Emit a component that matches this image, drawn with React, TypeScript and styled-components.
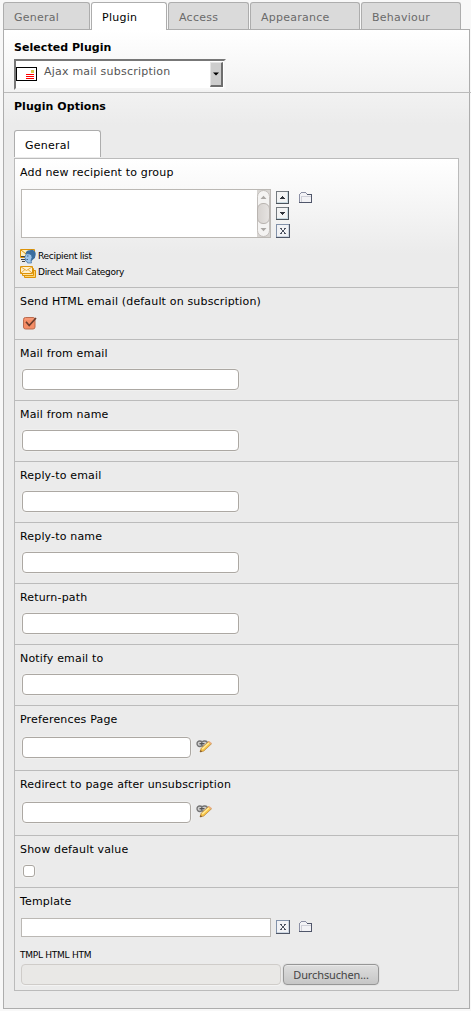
import React from 'react';
import styled, { createGlobalStyle, css } from 'styled-components';

const GlobalStyle = createGlobalStyle`
  *, *::before, *::after { box-sizing: border-box; }
  body { margin: 0; background: #f8f8f8; font-family: "DejaVu Sans", Verdana, sans-serif; font-size: 11px; letter-spacing: .165px; color: #000; }
  input, button { font: inherit; letter-spacing: inherit; margin: 0; padding: 0; outline: none; }
  svg { display: block; flex: none; }
`;

const Page = styled.main`
  width: 471px;
  height: 1011px;
  padding: 2px 0 0 3px;
  overflow: hidden;
`;

const TabBar = styled.nav`
  display: flex;
  gap: 1px;
  height: 28px;
  position: relative;
`;

const Tab = styled.button<{ $width: number; $active?: boolean }>`
  width: ${p => p.$width}px;
  height: ${p => (p.$active ? 28 : 27)}px;
  padding: 2px 0 0 10px;
  text-align: left;
  line-height: 25px;
  letter-spacing: .25px;
  border: 1px solid #adadad;
  border-bottom: 0;
  border-radius: 3px 3px 0 0;
  background: ${p => (p.$active ? '#fff' : '#dadada')};
  color: ${p => (p.$active ? '#000' : '#6a6a6a')};
`;

const Panel = styled.section`
  width: 467px;
  height: 980px;
  margin-top: -1px;
  border: 1px solid #adadad;
  background: linear-gradient(#fff, #ebebeb 95px) #ebebeb;
`;

const SelectedPlugin = styled.div`
  width: 467px;
  height: 63px;
  padding: 11px 0 0 10px;
  border-bottom: 1px solid #bbb;
`;

const Heading = styled.h2`
  margin: 0;
  font-size: 11px;
  line-height: 14px;
  font-weight: bold;
  letter-spacing: .05px;
`;

const SelectBox = styled.div`
  display: flex;
  width: 212px;
  height: 31px;
  margin-top: 4px;
  padding: 1px 1px 2px 0;
  border: 2px solid;
  border-color: #777 #f6f6f6 #f6f6f6 #777;
  background: #fff;
  color: #555;
`;

const SelectText = styled.span`
  flex: 1;
  padding: 3px 0 0 7px;
  line-height: 13px;
  letter-spacing: .22px;
`;

const EnvelopeSlot = styled.span`
  padding-top: 5px;
`;

const SelectArrow = styled.span`
  display: flex;
  align-items: center;
  justify-content: center;
  width: 13px;
  height: 25px;
  border: 1px solid;
  border-width: 1px 2px 2px 1px;
  border-color: #e4e4e4 #6e6e6e #6e6e6e #e4e4e4;
  background: #cdcdcd;
`;

const Options = styled.div`
  padding: 7px 10px 0;
`;

const InnerTab = styled.div`
  width: 87px;
  height: 27px;
  margin-top: 16px;
  padding: 2px 0 0 10px;
  line-height: 25px;
  letter-spacing: .25px;
  border: 1px solid #adadad;
  border-bottom: 0;
  border-radius: 3px 3px 0 0;
  background: #fff;
`;

const Form = styled.form`
  width: 445px;
  margin-top: 1px;
  border: 1px solid #bbb;
  border-bottom: 0;
  background: linear-gradient(#fff, #ebebeb 95px) #ebebeb;
`;

const Row = styled.div<{ $height: number }>`
  height: ${p => p.$height}px;
  padding: 6px 0 0 5px;
  border-bottom: 1px solid #bbb;
`;

const Label = styled.label`
  display: block;
  height: 15px;
  line-height: 15px;
`;

const Line = styled.div<{ $top: number; $left?: number }>`
  display: flex;
  align-items: flex-start;
  padding: ${p => p.$top}px 0 0 ${p => p.$left ?? 2}px;
`;

const TextInput = styled.input<{ $width: number }>`
  display: block;
  width: ${p => p.$width}px;
  height: 21px;
  border: 1px solid #aca8a3;
  border-radius: 4px;
  background: #fff;
  box-shadow: 0 0 0 1px #f0f0ef;
`;

const LinkSlot = styled.span`
  margin: 3px 0 0 5px;
`;

const CheckBox = styled.input.attrs({ type: 'checkbox' })`
  appearance: none;
  display: block;
  width: 12px;
  height: 12px;
  border: 1px solid #aaa6a1;
  border-radius: 3px;
  background: #fff;
  box-shadow: 0 0 0 1px #f1f1f0;
`;

const ListBox = styled.div`
  display: flex;
  justify-content: flex-end;
  width: 250px;
  height: 49px;
  border: 1px solid #bbb8b4;
  background: #fff;
`;

const Stack = styled.div`
  display: flex;
  flex-direction: column;
  gap: 3px;
  margin: 2px 0 0 5px;

  > :last-child { margin-top: 1px; }
`;

const IconSlot = styled.span<{ $top: number; $left: number }>`
  margin: ${p => p.$top}px 0 0 ${p => p.$left}px;
`;

const TypeList = styled.ul`
  list-style: none;
  margin: 10px 0 0;
  padding: 0;
`;

const TypeItem = styled.li`
  display: flex;
  gap: 2px;
  height: 16px;
  line-height: 16px;
  font-size: 9px;
  letter-spacing: -.3px;
`;

const PlainInput = styled.input`
  display: block;
  width: 250px;
  height: 19px;
  border: 1px solid #bbb8b4;
  background: #fff;
`;

const Extensions = styled.div`
  margin-top: 12px;
  height: 13px;
  line-height: 13px;
  font-size: 9px;
  letter-spacing: -.25px;
`;

const fileControl = css`
  height: 21px;
  border-radius: 4px;
`;

const FileField = styled.div`
  ${fileControl}
  width: 260px;
  border: 1px solid #cfccc9;
  background: #e9e8e6;
  box-shadow: 0 1px 0 #f3f3f3;
`;

const BrowseButton = styled.button`
  ${fileControl}
  width: 96px;
  margin-left: 2px;
  border: 1px solid #969696;
  background: linear-gradient(#dedede, #c6c6c6);
  box-shadow: 0 0 0 1px #e3e3e3, inset 0 1px 0 #e9e9e9;
  color: #454545;
  font-family: "Noto Sans", "Open Sans", sans-serif;
  font-size: 11px;
  letter-spacing: -.13px;
  line-height: 17px;
`;

const Envelope = () => (
  <svg width="21" height="14" viewBox="0 0 21 14" shapeRendering="crispEdges">
    <path d="M0 0h21v14H0z" fill="#000" />
    <path d="M1 1h19v12H1z" fill="#fff" />
    <path d="M15 3h3v3h-3z" fill="#d8c84c" />
    <path d="M10 7h8v1h-8zM10 9h8v1h-8zM10 11h8v1h-8z" fill="#f00" />
  </svg>
);

const ScrollBar = () => (
  <svg width="13" height="47" viewBox="0 0 13 47">
    <defs>
      <linearGradient id="thumb">
        <stop offset="0" stopColor="#d6d2cf" />
        <stop offset="1" stopColor="#e6e3e1" />
      </linearGradient>
    </defs>
    <path d="M0 0h13v47H0z" fill="#d8d5d2" />
    <rect x=".5" y=".5" width="12" height="46" rx="6" fill="#f4f3f2" stroke="#c2bebb" />
    <rect x=".5" y="13.5" width="12" height="20" rx="5.5" fill="url(#thumb)" stroke="#b9b4b0" />
    <path d="M3.5 9l3-3.2 3 3.2zM3.5 38h6l-3 3.2z" fill="#aaa7a4" />
  </svg>
);

const ArrowButton = ({ down }: { down?: boolean }) => (
  <svg width="13" height="13" viewBox="0 0 13 13" shapeRendering="crispEdges">
    <path d="M0 0h13v13H0z" fill="#4b535b" />
    <path d="M0 0h12v1H1v11H0z" fill="#747b80" />
    <path d="M1 1h11v11H1z" fill="#c9dbe2" />
    <path d="M1 1h10v10H1z" fill="#f3f4f4" />
    <path
      d={down ? 'M4 5h5v1H4zM5 6h3v1H5zM6 7h1v1H6z' : 'M6 5h1v1H6zM5 6h3v1H5zM4 7h5v1H4z'}
      fill="#30353b"
    />
  </svg>
);

const ClearButton = () => (
  <svg width="14" height="14" viewBox="0 0 14 14" shapeRendering="crispEdges">
    <path d="M0 0h14v14H0z" fill="#4e5565" />
    <path d="M0 0h13v1H1v12H0z" fill="#8292aa" />
    <path d="M1 1h12v12H1z" fill="#cbd5e1" />
    <path d="M1 1h11v11H1z" fill="#f1f2f5" />
    <path
      d="M4 4h2v1H4zM8 4h2v1H8zM5 5h1v1H5zM8 5h1v1H8zM6 6h2v2H6zM5 8h1v1H5zM8 8h1v1H8zM4 9h2v1H4zM8 9h2v1H8z"
      fill="#4c5260"
    />
  </svg>
);

const Folder = () => (
  <svg width="13" height="11" viewBox="0 0 13 11" shapeRendering="crispEdges">
    <path d="M1 2h1V1h5v1h1v1h4v7H1z" fill="#f2f2f5" />
    <path d="M2 4h10v1H3v5H2z" fill="#cfd0d8" />
    <path d="M0 2h1v8H0zM1 1h1v1H1zM2 0h5v1H2zM7 1h1v1H7z" fill="#8c90a5" />
    <path d="M8 2h5v1H8zM12 2h1v9h-1zM0 10h13v1H0z" fill="#50566a" />
  </svg>
);

const CheckedBox = () => (
  <svg width="15" height="14" viewBox="0 0 15 14">
    <rect x=".5" y="1.5" width="11.5" height="11.5" rx="2" fill="#f58d66" stroke="#bb6b4e" />
    <path d="M2 3h9" stroke="#f8a384" />
    <path d="M3 5.800l3.200 3.700L13 2" fill="none" stroke="#6b3c2c" strokeWidth="1.700" />
  </svg>
);

const RecipientIcon = () => (
  <svg width="16" height="16" viewBox="0 0 16 16">
    <path d="M.5 1.5h14v8H.5z" fill="#fff0c2" stroke="#dd9308" />
    <path d="M1 2l5 4 7-4" fill="none" stroke="#dd9308" />
    <path d="M1 8.5h4M1 11.5h4M2 13.5h3" stroke="#444" />
    <path d="M5.500 6Q6 2 10 2.300 12 1 14 2.500 16.200 4 15.600 7q0 3-2.600 4.500L11 13.500 9 8z" fill="#3b6d9f" />
    <path d="M6.500 5.500l3 .5 2 1 .5 2.500-1 3 .5 2.500H7.500L7 13.500 5.500 13V10.500L4.500 9.800z" fill="#9cc3ea" stroke="#3b6d9f" strokeWidth=".7" />
    <path d="M7 8h1.500M6.500 11.500h1.500" stroke="#3b6d9f" />
  </svg>
);

const CategoryIcon = () => (
  <svg width="16" height="16" viewBox="0 0 16 16">
    <path d="M4.500 6.500h11v7h-11z" fill="#ffd36b" stroke="#dd9308" />
    <path d="M2.500 4.500h11v7h-11z" fill="#ffe3a0" stroke="#dd9308" />
    <path d="M.5 2.500h12v7H.5z" fill="#fff0cc" stroke="#dd9308" />
    <path d="M1 3l5.500 3.500L12 3M1 9l4-3.500M12 9L8 5.500" fill="none" stroke="#e0a030" strokeWidth=".9" />
  </svg>
);

const LinkPencil = () => (
  <svg width="16" height="13" viewBox="0 0 16 13">
    <g fill="#cfcfcf" stroke="#747474" strokeWidth="1.300">
      <rect x="1" y="1" width="5.500" height="5.500" rx="2.700" />
      <rect x="5.500" y="1" width="6" height="5.500" rx="2.700" />
      <path d="M3.500 3.700h5" stroke="#4e4e4e" />
    </g>
    <path d="M4 12l1.200-3.800 7.300-6.700 3 2.300-7.700 7.200z" fill="#f8c548" stroke="#b5803a" strokeWidth=".7" />
    <path d="M6.200 9l6.600-6" stroke="#ffec9c" strokeWidth="1.500" />
    <path d="M12.200 1.900l1-.9 2.500 2.100-1 1z" fill="#eeb08a" />
    <path d="M4 12.100l.7-2 1.500 1.300z" fill="#714a25" />
  </svg>
);

const tabs = [
  { name: 'General', width: 87 },
  { name: 'Plugin', width: 76, active: true },
  { name: 'Access', width: 81 },
  { name: 'Appearance', width: 110 },
  { name: 'Behaviour', width: 100 },
];

const mailFields = [
  'Mail from email',
  'Mail from name',
  'Reply-to email',
  'Reply-to name',
  'Return-path',
  'Notify email to',
];

const pageFields = ['Preferences Page', 'Redirect to page after unsubscription'];

export default function App() {
  return (
    <>
      <GlobalStyle />
      <Page>
        <TabBar>
          {tabs.map(t => (
            <Tab key={t.name} $width={t.width} $active={t.active}>{t.name}</Tab>
          ))}
        </TabBar>
        <Panel>
          <SelectedPlugin>
            <Heading>Selected Plugin</Heading>
            <SelectBox>
              <EnvelopeSlot><Envelope /></EnvelopeSlot>
              <SelectText>Ajax mail subscription</SelectText>
              <SelectArrow>
                <svg width="6" height="4" viewBox="0 0 6 4"><path d="M0 .5h6L3 3.500z" /></svg>
              </SelectArrow>
            </SelectBox>
          </SelectedPlugin>
          <Options>
            <Heading>Plugin Options</Heading>
            <InnerTab>General</InnerTab>
            <Form>
              <Row $height={129}>
                <Label>Add new recipient to group</Label>
                <Line $top={9} $left={1}>
                  <ListBox><ScrollBar /></ListBox>
                  <Stack>
                    <ArrowButton />
                    <ArrowButton down />
                    <ClearButton />
                  </Stack>
                  <IconSlot $top={3} $left={9}><Folder /></IconSlot>
                </Line>
                <TypeList>
                  <TypeItem><RecipientIcon />Recipient list</TypeItem>
                  <TypeItem><CategoryIcon />Direct Mail Category</TypeItem>
                </TypeList>
              </Row>
              <Row $height={52}>
                <Label>Send HTML email (default on subscription)</Label>
                <Line $top={7} $left={3}><CheckedBox /></Line>
              </Row>
              {mailFields.map(name => (
                <Row key={name} $height={61}>
                  <Label>{name}</Label>
                  <Line $top={8}><TextInput $width={217} /></Line>
                </Row>
              ))}
              {pageFields.map(name => (
                <Row key={name} $height={65}>
                  <Label>{name}</Label>
                  <Line $top={10}>
                    <TextInput $width={169} />
                    <LinkSlot><LinkPencil /></LinkSlot>
                  </Line>
                </Row>
              ))}
              <Row $height={52}>
                <Label>Show default value</Label>
                <Line $top={8} $left={3}><CheckBox /></Line>
              </Row>
              <Row $height={103}>
                <Label>Template</Label>
                <Line $top={9} $left={1}>
                  <PlainInput />
                  <IconSlot $top={2} $left={5}><ClearButton /></IconSlot>
                  <IconSlot $top={3} $left={9}><Folder /></IconSlot>
                </Line>
                <Extensions>TMPL HTML HTM</Extensions>
                <Line $top={2} $left={1}>
                  <FileField />
                  <BrowseButton type="button">Durchsuchen...</BrowseButton>
                </Line>
              </Row>
            </Form>
          </Options>
        </Panel>
      </Page>
    </>
  );
}
